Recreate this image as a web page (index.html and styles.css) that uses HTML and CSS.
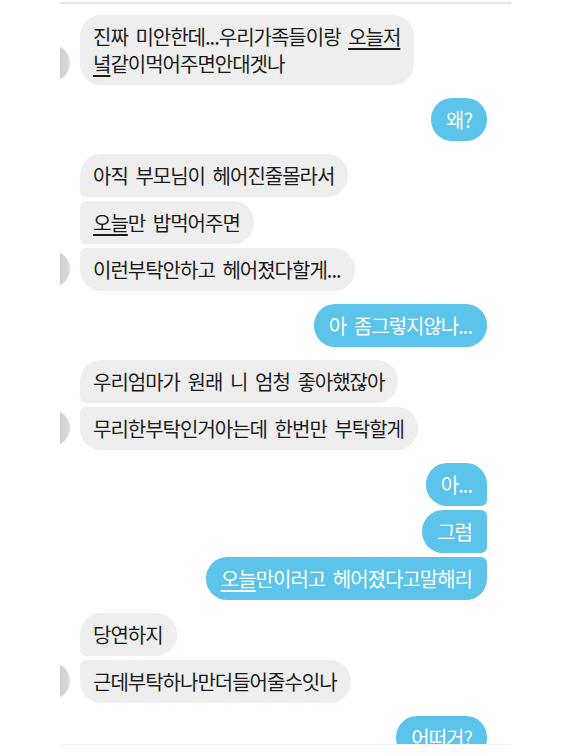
FILE: index.html
```html
<!DOCTYPE html>
<html lang="ko">
<head>
  <meta charset="UTF-8">
  <meta name="viewport" content="width=device-width, initial-scale=1.0">
  <title>메시지</title>
  <link rel="stylesheet" href="styles.css">
</head>
<body>
  <div class="screen">
    <div class="thread">

      <div class="group in">
        <div class="avatar"></div>
        <div class="bubbles">
          <p class="bubble">진짜 미안한데...우리가족들이랑 <u>오늘저</u><br><u>녘</u>같이먹어주면안대겟나</p>
        </div>
      </div>

      <div class="group out">
        <div class="bubbles">
          <p class="bubble">왜?</p>
        </div>
      </div>

      <div class="group in">
        <div class="avatar"></div>
        <div class="bubbles">
          <p class="bubble">아직 부모님이 헤어진줄몰라서</p>
          <p class="bubble"><u>오늘</u>만 밥먹어주면</p>
          <p class="bubble">이런부탁안하고 헤어졌다할게...</p>
        </div>
      </div>

      <div class="group out">
        <div class="bubbles">
          <p class="bubble">아 좀그렇지않나...</p>
        </div>
      </div>

      <div class="group in">
        <div class="avatar"></div>
        <div class="bubbles">
          <p class="bubble">우리엄마가 원래 니 엄청 좋아했잖아</p>
          <p class="bubble">무리한부탁인거아는데 한번만 부탁할게</p>
        </div>
      </div>

      <div class="group out">
        <div class="bubbles">
          <p class="bubble">아...</p>
          <p class="bubble">그럼</p>
          <p class="bubble"><u>오늘</u>만이러고 헤어졌다고말해리</p>
        </div>
      </div>

      <div class="group in">
        <div class="avatar"></div>
        <div class="bubbles">
          <p class="bubble">당연하지</p>
          <p class="bubble">근데부탁하나만더들어줄수잇나</p>
        </div>
      </div>

      <div class="group out">
        <div class="bubbles">
          <p class="bubble">어떠거?</p>
        </div>
      </div>

    </div>
  </div>
</body>
</html>
```

FILE: styles.css
```css
* {
  margin: 0;
  padding: 0;
  box-sizing: border-box;
}

body {
  font-family: "Noto Sans CJK KR", "Noto Sans", sans-serif;
  background: #fff;
  color: #1c1c1c;
}

.screen {
  width: 451px;
  height: 743px;
  margin: 2px 0 0 60px;
  border-top: 2px solid #e6e6e6;
  border-bottom: 1px solid #f2f2f2;
  overflow: hidden;
}

.thread {
  display: flex;
  flex-direction: column;
  gap: 13px;
  padding: 11px 24px 0 0;
}

.group {
  display: flex;
  align-items: flex-end;
}

.group.out {
  justify-content: flex-end;
}

.avatar {
  flex: none;
  width: 36px;
  height: 36px;
  margin: 0 10px 4px -26px;
  border-radius: 50%;
  background: linear-gradient(90deg, #bdbdbd 0%, #cfcfcf 70%, #dcdcdc 100%);
}

.bubbles {
  display: flex;
  flex-direction: column;
  align-items: flex-start;
  gap: 4px;
}

.out .bubbles {
  align-items: flex-end;
}

.bubble {
  font-size: 20px;
  line-height: 27px;
  letter-spacing: -1px;
  word-spacing: 3px;
  white-space: nowrap;
  padding: 8px 14px 8px 13px;
  border-radius: 21px;
  background: #eeeeee;
}

.bubble u {
  text-decoration-thickness: 1.5px;
  text-underline-offset: 3px;
}

.in .bubble:not(:last-child) {
  border-bottom-left-radius: 6px;
}

.in .bubble:not(:first-child) {
  border-top-left-radius: 6px;
}

.out .bubble {
  background: #5cc3ea;
  color: #fff;
  padding: 8px 15px;
}

.out .bubble:not(:last-child) {
  border-bottom-right-radius: 6px;
}

.out .bubble:not(:first-child) {
  border-top-right-radius: 6px;
}
```
